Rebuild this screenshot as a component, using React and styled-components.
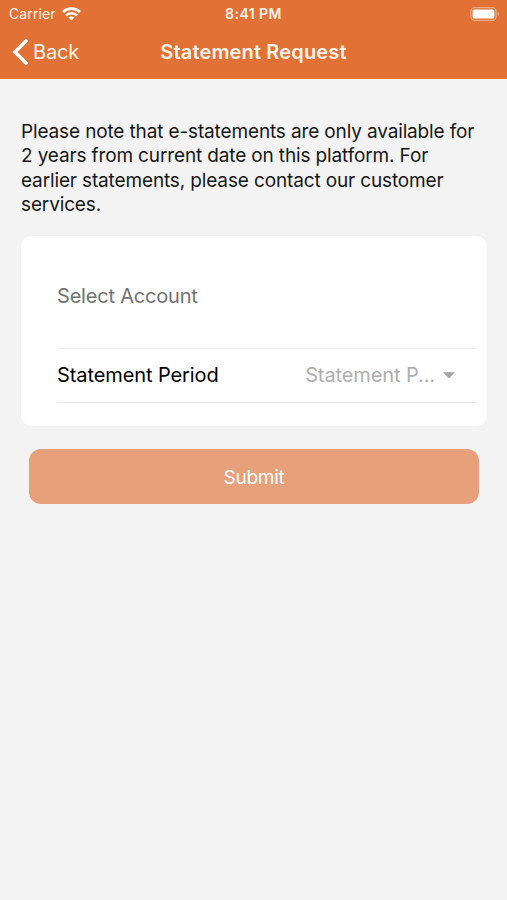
import React from 'react';
import styled, { createGlobalStyle } from 'styled-components';

const GlobalStyle = createGlobalStyle`
  * {
    box-sizing: border-box;
  }
  body {
    margin: 0;
    background-color: #f3f3f3;
    font-family: Inter, 'Liberation Sans', sans-serif;
  }
`;
const Screen = styled.div`
  width: 100%;
  height: 100vh;
  background-color: #f3f3f3;
  overflow: hidden;
`;
const Header = styled.header`
  height: 79px;
  background-color: #e17135;
  color: #fff3ea;
`;
const StatusBar = styled.div`
  height: 27px;
  padding: 0 7px;
  display: grid;
  grid-template-columns: 1fr auto 1fr;
  align-items: center;
  font-size: 14px;
  line-height: 27px;
`;
const Carrier = styled.div`
  padding-left: 2px;
  display: flex;
  align-items: center;
  gap: 6px;
  letter-spacing: 0.1px;
`;
const Time = styled.div`
  font-size: 14px;
  font-weight: 600;
  letter-spacing: 0.45px;
`;
const Battery = styled.svg`
  justify-self: end;
`;
const NavBar = styled.nav`
  height: 50px;
  padding: 0 12px;
  display: grid;
  grid-template-columns: 1fr auto 1fr;
  align-items: center;
`;
const BackButton = styled.button`
  padding: 0;
  border: none;
  background: none;
  display: flex;
  align-items: center;
  gap: 5px;
  color: inherit;
  font-family: inherit;
  font-size: 20px;
  letter-spacing: -0.2px;
`;
const Title = styled.h1`
  margin: 0;
  font-size: 20px;
  font-weight: 600;
  letter-spacing: 0.15px;
`;
const Content = styled.main`
  padding: 41px 20px 0 21px;
`;
const Note = styled.p`
  margin: 0;
  color: #161616;
  font-size: 19px;
  line-height: 24.4px;
  letter-spacing: -0.14px;
`;
const Card = styled.section`
  height: 190px;
  margin-top: 18px;
  padding: 0 11px 0 36px;
  border-radius: 11px;
  background-color: #fff;
  font-size: 20px;
`;
const AccountRow = styled.div`
  height: 113px;
  padding-top: 8px;
  display: flex;
  align-items: center;
  border-bottom: 1px solid #ebebeb;
  color: #717175;
  letter-spacing: -0.2px;
`;
const PeriodRow = styled.div`
  height: 54px;
  padding-right: 21px;
  display: flex;
  align-items: center;
  justify-content: space-between;
  border-bottom: 1px solid #e6e6e6;
  color: #000;
  letter-spacing: -0.1px;
`;
const Picker = styled.div`
  display: flex;
  align-items: center;
  gap: 8px;
  color: #aeaeae;
`;
const SubmitButton = styled.button`
  width: calc(100% - 16px);
  height: 55px;
  margin: 23px 8px 0;
  padding: 2px 0 0;
  border: none;
  border-radius: 12px;
  background-color: #e6a07a;
  color: #fff;
  font-family: inherit;
  font-size: 19px;
  letter-spacing: -0.25px;
`;

const WifiIcon = () => (
  <svg width="19" height="14" viewBox="0 0 19 14" fill="none" stroke="#fff">
    <path d="M1 5C5.7 0.5 13.3 0.5 18 5" strokeWidth="2.6" />
    <path d="M4 8.3C7.1 5.4 11.9 5.4 15 8.3" strokeWidth="2.5" />
    <path d="M9.5 13.6L6.5 10.6C8.2 9.1 10.8 9.1 12.5 10.6Z" fill="#fff" stroke="none" />
  </svg>
);

const BatteryIcon = () => (
  <Battery width="30" height="14" viewBox="0 0 30 14">
    <rect x="0.9" y="0.7" width="25.2" height="12.6" rx="3.6" fill="none" stroke="#efa982" strokeWidth="1.2" />
    <rect x="2.6" y="2.4" width="21.8" height="9.2" rx="1.6" fill="#fff" />
    <path d="M27.6 4.8C29.7 5.5 29.7 8.5 27.6 9.2Z" fill="#efa982" />
  </Battery>
);

const BackIcon = () => (
  <svg width="16" height="26" viewBox="0 0 16 26" fill="none">
    <path d="M14 2L3 13L14 24" stroke="#fff" strokeWidth="3.6" strokeLinecap="round" />
  </svg>
);

const ArrowIcon = () => (
  <svg width="12" height="7" viewBox="0 0 12 7">
    <path d="M0 0.3H12L6 6.6Z" fill="#a3a3a3" />
  </svg>
);

const App = () => {
  return (
    <Screen>
      <GlobalStyle />
      <Header>
        <StatusBar>
          <Carrier>
            Carrier
            <WifiIcon />
          </Carrier>
          <Time>8:41 PM</Time>
          <BatteryIcon />
        </StatusBar>
        <NavBar>
          <BackButton>
            <BackIcon />
            Back
          </BackButton>
          <Title>Statement Request</Title>
        </NavBar>
      </Header>
      <Content>
        <Note>
          Please note that e-statements are only available for
          <br />2 years from current date on this platform. For
          <br />
          earlier statements, please contact our customer
          <br />
          services.
        </Note>
        <Card>
          <AccountRow>Select Account</AccountRow>
          <PeriodRow>
            <span>Statement Period</span>
            <Picker>
              <span>Statement P...</span>
              <ArrowIcon />
            </Picker>
          </PeriodRow>
        </Card>
        <SubmitButton>Submit</SubmitButton>
      </Content>
    </Screen>
  );
};

export default App;
